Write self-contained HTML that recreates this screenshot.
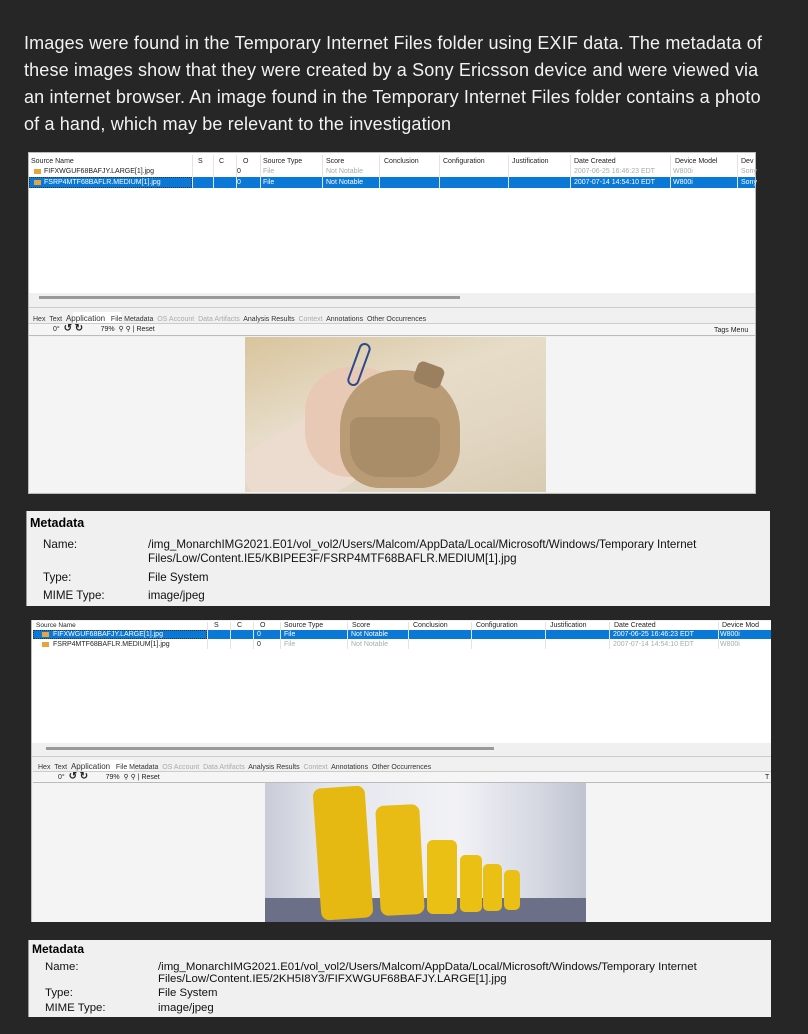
<!DOCTYPE html>
<html><head><meta charset="utf-8"><style>
*{margin:0;padding:0;box-sizing:border-box}
body{width:808px;height:1034px;background:#262626;position:relative;overflow:hidden;font-family:"Liberation Sans",sans-serif}
.a{position:absolute;white-space:nowrap}
.p{color:#f2f2f2;font-size:18px;letter-spacing:0.15px;left:24px;line-height:27px}
.t{font-size:7px;color:#222;line-height:9px}
.g{color:#aaa}
.w{color:#fff}
.sep{position:absolute;width:1px;background:#e3e3e3}
.m{font-size:11.6px;color:#111;line-height:14px}
.n{font-size:11.4px;color:#111;line-height:12px}
</style></head><body>

<div class="a p" style="top:30px">Images were found in the Temporary Internet Files folder using EXIF data. The metadata of<br>these images show that they were created by a Sony Ericsson device and were viewed via<br>an internet browser. An image found in the Temporary Internet Files folder contains a photo<br>of a hand, which may be relevant to the investigation</div>

<!-- Panel 1 -->
<div class="a" style="left:28px;top:152px;width:728px;height:342px;background:#f0f0f0;border:1px solid #bbb"></div>
<div class="a" style="left:29px;top:153px;width:726px;height:140px;background:#fff"></div>
<div class="a" style="left:29px;top:177px;width:726px;height:11px;background:#0a78d7"></div>
<div class="a" style="left:29px;top:177px;width:163px;height:11px;border:1px dotted #333"></div>
<div class="sep" style="left:192px;top:155px;height:33px"></div>
<div class="sep" style="left:213px;top:155px;height:33px"></div>
<div class="sep" style="left:236px;top:155px;height:33px"></div>
<div class="sep" style="left:260px;top:155px;height:33px"></div>
<div class="sep" style="left:322px;top:155px;height:33px"></div>
<div class="sep" style="left:379px;top:155px;height:33px"></div>
<div class="sep" style="left:439px;top:155px;height:33px"></div>
<div class="sep" style="left:508px;top:155px;height:33px"></div>
<div class="sep" style="left:570px;top:155px;height:33px"></div>
<div class="sep" style="left:670px;top:155px;height:33px"></div>
<div class="sep" style="left:737px;top:155px;height:33px"></div>
<div class="a t" style="left:31px;top:157px">Source Name</div>
<div class="a t" style="left:198px;top:157px">S</div>
<div class="a t" style="left:219px;top:157px">C</div>
<div class="a t" style="left:243px;top:157px">O</div>
<div class="a t" style="left:263px;top:157px">Source Type</div>
<div class="a t" style="left:326px;top:157px">Score</div>
<div class="a t" style="left:384px;top:157px">Conclusion</div>
<div class="a t" style="left:443px;top:157px">Configuration</div>
<div class="a t" style="left:512px;top:157px">Justification</div>
<div class="a t" style="left:574px;top:157px">Date Created</div>
<div class="a t" style="left:675px;top:157px">Device Model</div>
<div class="a t" style="left:741px;top:157px">Dev</div>
<div class="a" style="left:34px;top:169px;width:7px;height:5px;background:#e8a33a"></div>
<div class="a t" style="left:44px;top:167px">FIFXWGUF68BAFJY.LARGE[1].jpg</div>
<div class="a t" style="left:237px;top:167px">0</div>
<div class="a t g" style="left:263px;top:167px">File</div>
<div class="a t g" style="left:326px;top:167px">Not Notable</div>
<div class="a t g" style="left:574px;top:167px">2007-06-25 16:46:23 EDT</div>
<div class="a t g" style="left:673px;top:167px">W800i</div>
<div class="a t g" style="left:741px;top:167px">Sony</div>
<div class="a" style="left:34px;top:180px;width:7px;height:5px;background:#e8a33a"></div>
<div class="a t w" style="left:44px;top:178px">FSRP4MTF68BAFLR.MEDIUM[1].jpg</div>
<div class="a t w" style="left:237px;top:178px">0</div>
<div class="a t w" style="left:263px;top:178px">File</div>
<div class="a t w" style="left:326px;top:178px">Not Notable</div>
<div class="a t w" style="left:574px;top:178px">2007-07-14 14:54:10 EDT</div>
<div class="a t w" style="left:673px;top:178px">W800i</div>
<div class="a t w" style="left:741px;top:178px">Sony</div>
<div class="a" style="left:29px;top:293px;width:726px;height:15px;background:#f0f0f0;border-bottom:1px solid #ccc"></div>
<div class="a" style="left:39px;top:296px;width:421px;height:3px;background:#999"></div>
<div class="a" style="left:73px;top:312px;width:48px;height:11px;background:#fff"></div>
<div class="a t" style="left:33px;top:314px;color:#333">Hex&nbsp; Text&nbsp; <span style="font-size:8px">Application</span>&nbsp;&nbsp; File Metadata&nbsp; <span class="g">OS Account&nbsp; Data Artifacts</span>&nbsp; Analysis Results&nbsp; <span class="g">Context</span>&nbsp; Annotations&nbsp; Other Occurrences</div>
<div class="a" style="left:29px;top:323px;width:726px;height:13px;background:#f5f5f5;border-top:1px solid #ccc;border-bottom:1px solid #bbb"></div>
<div class="a t" style="left:53px;top:325px;font-size:7px">0°&nbsp; <b style="font-size:10px;line-height:8px">↺ ↻</b>&nbsp;&nbsp;&nbsp;&nbsp;&nbsp;&nbsp;&nbsp;&nbsp; 79%&nbsp; ⚲ ⚲ | Reset</div>
<div class="a t" style="left:714px;top:326px">Tags Menu</div>
<div class="a" style="left:29px;top:337px;width:726px;height:155px;background:#f4f4f4"></div>
<div class="a" style="left:245px;top:337px;width:301px;height:155px;background:linear-gradient(160deg,#d9c49c 0%,#e6dcc8 40%,#e1d6c2 70%,#d8cbb2 100%);overflow:hidden">
  <div class="a" style="left:0;top:90px;width:110px;height:80px;background:#ecdcd0;transform:rotate(-30deg);border-radius:20px"></div>
  <div class="a" style="left:60px;top:30px;width:100px;height:110px;background:#e8c9b6;border-radius:45px"></div>
  <div class="a" style="left:95px;top:33px;width:120px;height:118px;background:#b99b76;border-radius:58px 58px 40px 40px"></div>
  <div class="a" style="left:105px;top:80px;width:90px;height:60px;background:#a98c68;border-radius:10px 10px 30px 30px"></div>
  <div class="a" style="left:170px;top:27px;width:28px;height:22px;background:#9b8060;border-radius:6px;transform:rotate(20deg)"></div>
  <div class="a" style="left:108px;top:5px;width:12px;height:45px;border:2px solid #2b4a8c;border-radius:8px;transform:rotate(20deg)"></div>
</div>

<!-- Metadata 1 -->
<div class="a" style="left:26px;top:511px;width:744px;height:95px;background:#f0f0f0;border-left:1px solid #999"></div>
<div class="a" style="left:30px;top:516px;font-size:12.5px;font-weight:bold;color:#000">Metadata</div>
<div class="a m" style="left:43px;top:538px">Name:</div>
<div class="a m" style="left:148px;top:538px">/img_MonarchIMG2021.E01/vol_vol2/Users/Malcom/AppData/Local/Microsoft/Windows/Temporary Internet<br>Files/Low/Content.IE5/KBIPEE3F/FSRP4MTF68BAFLR.MEDIUM[1].jpg</div>
<div class="a m" style="left:43px;top:571px">Type:</div>
<div class="a m" style="left:148px;top:571px">File System</div>
<div class="a m" style="left:43px;top:589px">MIME Type:</div>
<div class="a m" style="left:148px;top:589px">image/jpeg</div>

<!-- Panel 2 -->
<div class="a" style="left:31px;top:620px;width:740px;height:302px;background:#f0f0f0;border-left:1px solid #bbb"></div>
<div class="a" style="left:32px;top:621px;width:739px;height:122px;background:#fff"></div>
<div class="a" style="left:33px;top:630px;width:738px;height:9px;background:#0a78d7"></div>
<div class="a" style="left:33px;top:630px;width:174px;height:9px;border:1px dotted #333"></div>
<div class="sep" style="left:207px;top:622px;height:27px"></div>
<div class="sep" style="left:230px;top:622px;height:27px"></div>
<div class="sep" style="left:253px;top:622px;height:27px"></div>
<div class="sep" style="left:280px;top:622px;height:27px"></div>
<div class="sep" style="left:347px;top:622px;height:27px"></div>
<div class="sep" style="left:408px;top:622px;height:27px"></div>
<div class="sep" style="left:471px;top:622px;height:27px"></div>
<div class="sep" style="left:545px;top:622px;height:27px"></div>
<div class="sep" style="left:609px;top:622px;height:27px"></div>
<div class="sep" style="left:718px;top:622px;height:27px"></div>
<div class="a t" style="left:36px;top:621px;font-size:6.5px">Source Name</div>
<div class="a t" style="left:214px;top:621px">S</div>
<div class="a t" style="left:237px;top:621px">C</div>
<div class="a t" style="left:260px;top:621px">O</div>
<div class="a t" style="left:284px;top:621px">Source Type</div>
<div class="a t" style="left:352px;top:621px">Score</div>
<div class="a t" style="left:413px;top:621px">Conclusion</div>
<div class="a t" style="left:476px;top:621px">Configuration</div>
<div class="a t" style="left:550px;top:621px">Justification</div>
<div class="a t" style="left:614px;top:621px">Date Created</div>
<div class="a t" style="left:722px;top:621px">Device Mod</div>
<div class="a" style="left:42px;top:632px;width:7px;height:5px;background:#e8a33a"></div>
<div class="a t w" style="left:53px;top:630px">FIFXWGUF68BAFJY.LARGE[1].jpg</div>
<div class="a t w" style="left:257px;top:630px">0</div>
<div class="a t w" style="left:284px;top:630px">File</div>
<div class="a t w" style="left:351px;top:630px">Not Notable</div>
<div class="a t w" style="left:613px;top:630px">2007-06-25 16:46:23 EDT</div>
<div class="a t w" style="left:720px;top:630px">W800i</div>
<div class="a" style="left:42px;top:642px;width:7px;height:5px;background:#e8a33a"></div>
<div class="a t" style="left:53px;top:640px">FSRP4MTF68BAFLR.MEDIUM[1].jpg</div>
<div class="a t" style="left:257px;top:640px">0</div>
<div class="a t g" style="left:284px;top:640px">File</div>
<div class="a t g" style="left:351px;top:640px">Not Notable</div>
<div class="a t g" style="left:613px;top:640px">2007-07-14 14:54:10 EDT</div>
<div class="a t g" style="left:720px;top:640px">W800i</div>
<div class="a" style="left:32px;top:743px;width:739px;height:14px;background:#f0f0f0;border-bottom:1px solid #ccc"></div>
<div class="a" style="left:46px;top:747px;width:448px;height:3px;background:#999"></div>
<div class="a" style="left:81px;top:760px;width:53px;height:11px;background:#fff"></div>
<div class="a t" style="left:38px;top:762px;color:#333">Hex&nbsp; Text&nbsp; <span style="font-size:8px">Application</span>&nbsp;&nbsp; File Metadata&nbsp; <span class="g">OS Account&nbsp; Data Artifacts</span>&nbsp; Analysis Results&nbsp; <span class="g">Context</span>&nbsp; Annotations&nbsp; Other Occurrences</div>
<div class="a" style="left:33px;top:771px;width:738px;height:12px;background:#f5f5f5;border-top:1px solid #ccc;border-bottom:1px solid #bbb"></div>
<div class="a t" style="left:58px;top:773px">0°&nbsp; <b style="font-size:10px;line-height:8px">↺ ↻</b>&nbsp;&nbsp;&nbsp;&nbsp;&nbsp;&nbsp;&nbsp;&nbsp; 79%&nbsp; ⚲ ⚲ | Reset</div>
<div class="a t" style="left:765px;top:773px">T</div>
<div class="a" style="left:33px;top:783px;width:738px;height:139px;background:#f4f4f4"></div>
<div class="a" style="left:265px;top:783px;width:321px;height:139px;background:linear-gradient(90deg,#c9ccd8 0%,#e4e6ee 20%,#f2f2f6 60%,#d5d8e2 85%,#bfc3d0 100%);overflow:hidden">
  <div class="a" style="left:0;top:115px;width:321px;height:30px;background:#6b7088"></div>
  <div class="a" style="left:52px;top:4px;width:52px;height:132px;background:#e6b812;border-radius:8px;transform:rotate(-4deg)"></div>
  <div class="a" style="left:113px;top:22px;width:44px;height:110px;background:#e8bc14;border-radius:8px;transform:rotate(-3deg)"></div>
  <div class="a" style="left:162px;top:57px;width:30px;height:74px;background:#eac015;border-radius:6px"></div>
  <div class="a" style="left:195px;top:72px;width:22px;height:57px;background:#eac015;border-radius:5px"></div>
  <div class="a" style="left:218px;top:81px;width:19px;height:47px;background:#eac015;border-radius:5px"></div>
  <div class="a" style="left:239px;top:87px;width:16px;height:40px;background:#eac015;border-radius:5px"></div>
</div>

<!-- Metadata 2 -->
<div class="a" style="left:28px;top:940px;width:743px;height:77px;background:#f0f0f0;border-left:1px solid #999"></div>
<div class="a" style="left:32px;top:942px;font-size:12px;font-weight:bold;color:#000">Metadata</div>
<div class="a n" style="left:45px;top:961px">Name:</div>
<div class="a n" style="left:158px;top:961px">/img_MonarchIMG2021.E01/vol_vol2/Users/Malcom/AppData/Local/Microsoft/Windows/Temporary Internet<br>Files/Low/Content.IE5/2KH5I8Y3/FIFXWGUF68BAFJY.LARGE[1].jpg</div>
<div class="a n" style="left:45px;top:987px">Type:</div>
<div class="a n" style="left:158px;top:987px">File System</div>
<div class="a n" style="left:45px;top:1002px">MIME Type:</div>
<div class="a n" style="left:158px;top:1002px">image/jpeg</div>
</body></html>
